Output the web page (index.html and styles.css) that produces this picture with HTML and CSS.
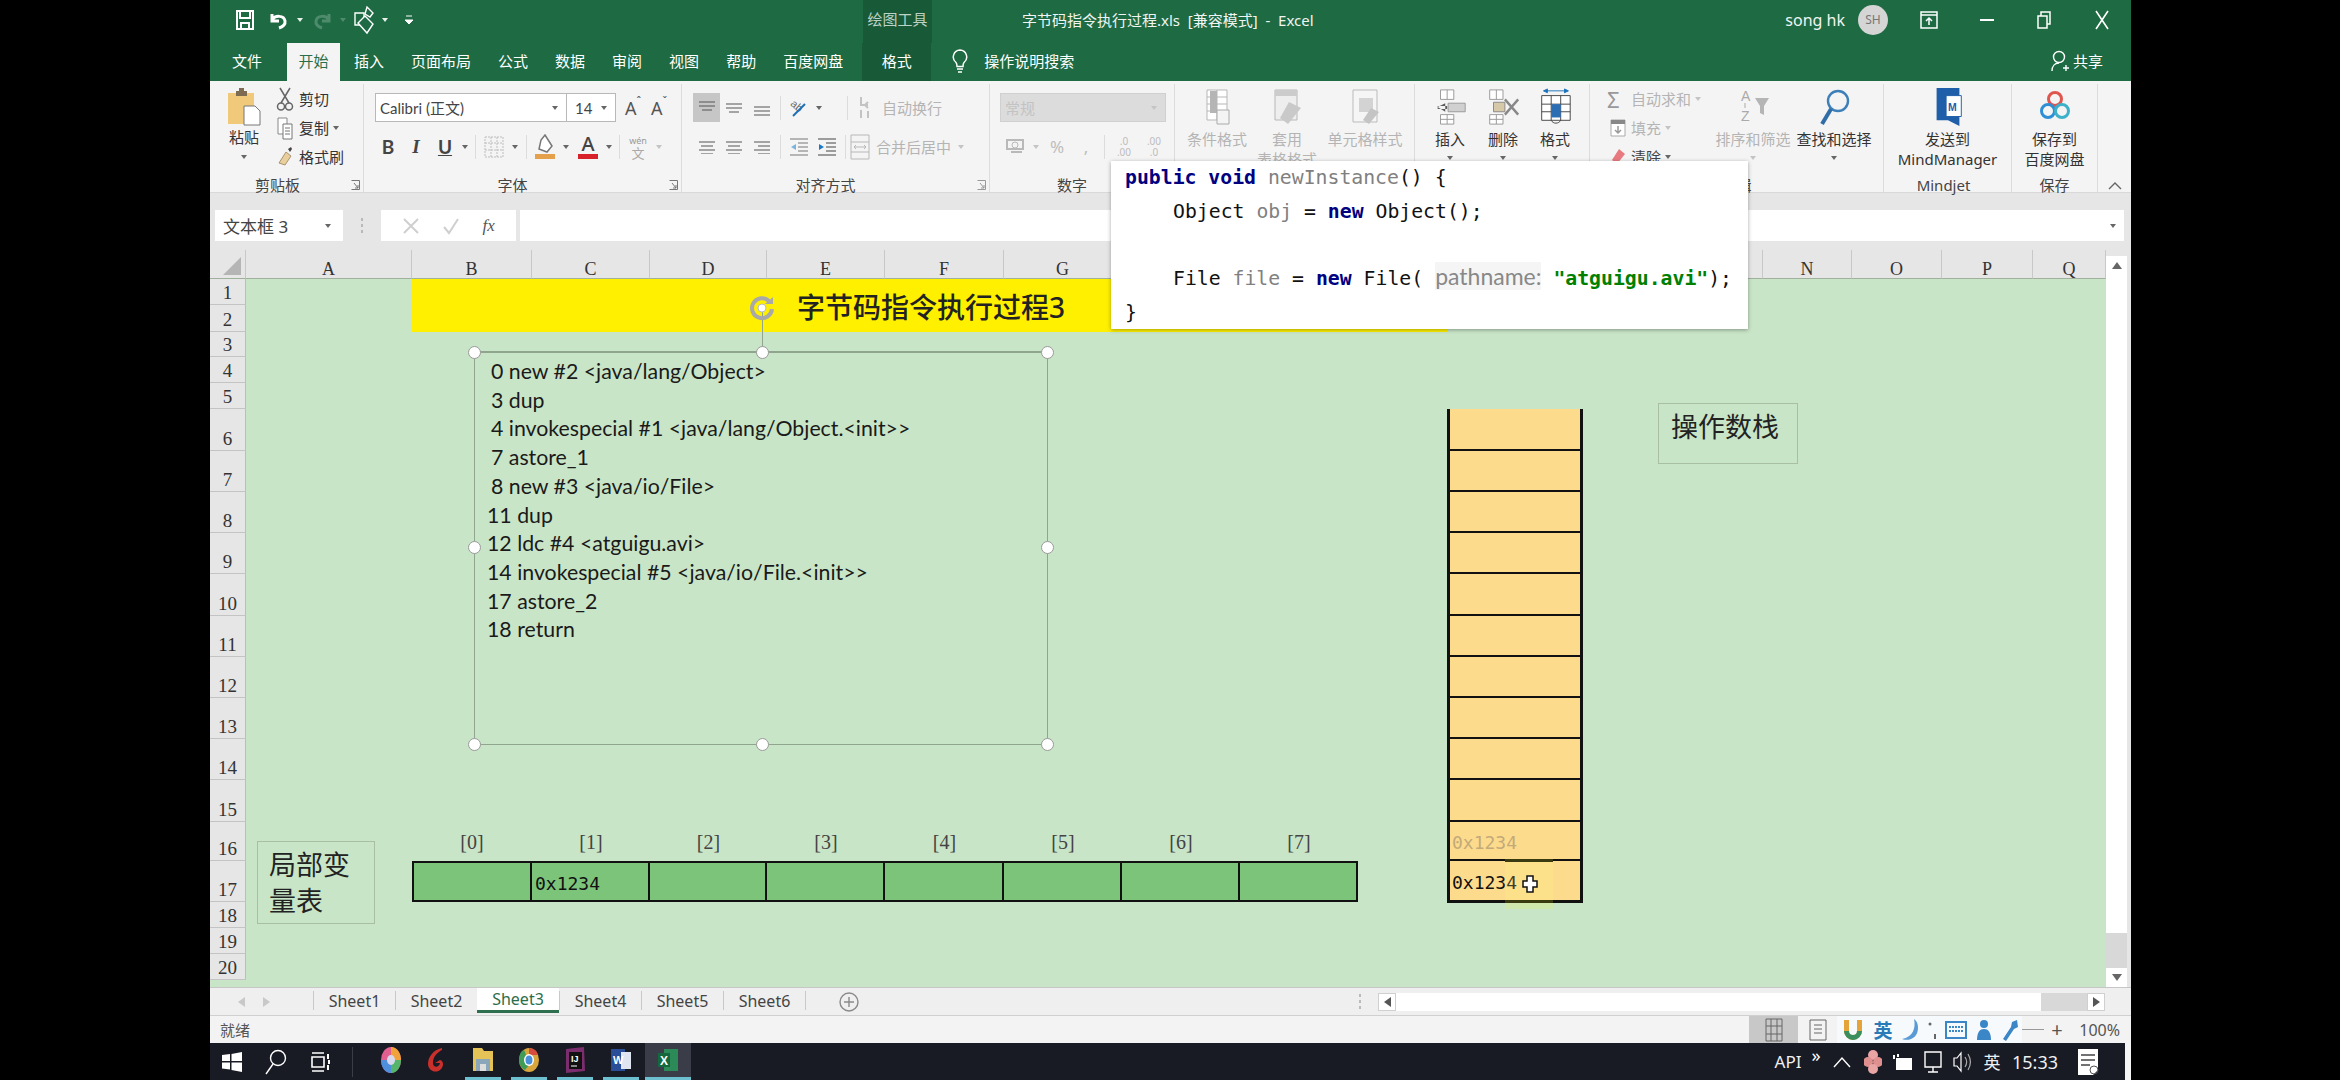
FILE: index.html
```html
<!DOCTYPE html>
<html lang="zh">
<head>
<meta charset="utf-8">
<title>字节码指令执行过程.xls - Excel</title>
<link rel="stylesheet" href="styles.css">
</head>
<body>
<div class="window">

  <header class="titlebar">
    <div class="qat">
      <span class="slot w46"><svg width="22" height="24" viewBox="0 0 22 24"><path d="M3 3h16v18H3z" fill="none" stroke="#fff" stroke-width="2"/><path d="M6 3h10v7H6zM7 21v-6h8v6" fill="none" stroke="#fff" stroke-width="2"/></svg></span>
      <span class="slot w22"><svg width="20" height="22" viewBox="0 0 20 22"><path d="M3 5v7h7M3 11c3-5 12-5 13 1 .6 4-3 6-6 7" fill="none" stroke="#fff" stroke-width="3"/></svg></span>
      <span class="slot w20"><i class="caret caret-light"></i></span>
      <span class="slot w24"><svg width="20" height="22" viewBox="0 0 20 22"><path d="M17 5v7h-7M17 11c-3-5-12-5-13 1-.6 4 3 6 6 7" fill="none" stroke="#4d8b6c" stroke-width="3"/></svg></span>
      <span class="slot w18"><i class="caret caret-dim"></i></span>
      <span class="slot w28"><svg width="26" height="30" viewBox="0 0 26 30"><path d="M2 8h9v12H2z" fill="none" stroke="#fff" stroke-width="1.4"/><path d="M14 2l6 6-3 4-5-3zM5 18l7-7 8 8-6 9z" fill="#1d6a44" stroke="#fff" stroke-width="1.4"/></svg></span>
      <span class="slot w10"><i class="caret caret-light"></i></span>
      <span class="slot w38"><svg width="10" height="12" viewBox="0 0 10 12"><path d="M2 2h6M1 6h8l-4 4z" fill="#fff" stroke="#fff"/></svg></span>
    </div>
    <div class="context-title">绘图工具</div>
    <div class="doc-title">字节码指令执行过程.xls&nbsp; [兼容模式]&nbsp; -&nbsp; Excel</div>
    <div class="win-controls">
      <span class="user-name">song hk</span>
      <span class="avatar">SH</span>
      <span class="slot w82"><svg width="18" height="18" viewBox="0 0 18 18"><path d="M1 1h16v16H1zM1 4h16M9 14V7M6 10l3-3 3 3" fill="none" stroke="#fff" stroke-width="1.5"/></svg></span>
      <span class="slot w34"><svg width="14" height="4" viewBox="0 0 14 4"><path d="M0 2h14" stroke="#fff" stroke-width="2"/></svg></span>
      <span class="slot w80"><svg width="14" height="18" viewBox="0 0 14 18"><path d="M1 5h9v12H1zM4 5V1h9v12h-3" fill="none" stroke="#fff" stroke-width="1.5"/></svg></span>
      <span class="slot w36"><svg width="14" height="20" viewBox="0 0 14 20"><path d="M1 1l12 18M13 1L1 19" stroke="#fff" stroke-width="1.6"/></svg></span>
    </div>
  </header>

  <nav class="tabs">
    <span class="tab">文件</span>
    <span class="tab tab-active">开始</span>
    <span class="tab">插入</span>
    <span class="tab">页面布局</span>
    <span class="tab">公式</span>
    <span class="tab">数据</span>
    <span class="tab">审阅</span>
    <span class="tab">视图</span>
    <span class="tab">帮助</span>
    <span class="tab">百度网盘</span>
    <span class="tab tab-context">格式</span>
    <span class="tell-me">
      <svg width="16" height="24" viewBox="0 0 16 24"><path d="M8 1a7 7 0 0 0-4 12.500c1 1 1 3 1 4h6c0-1 0-3 1-4A7 7 0 0 0 8 1zM5 20h6M6 23h4" fill="none" stroke="#fff" stroke-width="1.5"/></svg>
      <span>操作说明搜索</span>
    </span>
    <span class="share">
      <svg width="18" height="24" viewBox="0 0 18 24"><circle cx="8" cy="8" r="5.500" fill="none" stroke="#fff" stroke-width="1.400"/><path d="M1 22c0-5 3-8 7-8M12 19h6M15 16v6" fill="none" stroke="#fff" stroke-width="1.400"/></svg>
      <span>共享</span>
    </span>
  </nav>

  <section class="ribbon">
    <!-- 剪贴板 -->
    <div class="group g-clip">
      <div class="group-body clip-body">
        <div class="paste-col">
          <svg class="paste-icon" width="34" height="38" viewBox="0 0 34 38"><path d="M1 5h26v31H1z" fill="#f0c97a"/><path d="M9 3h3V0h5v3h3v5H9z" fill="#7d6c52"/><path d="M17 18h11l5 5v14H17z" fill="#fff" stroke="#777"/></svg>
          <span>粘贴</span>
          <i class="caret caret-dark paste-caret"></i>
        </div>
        <div class="three-rows">
          <div class="small-row"><svg class="small-icon" width="18" height="24" viewBox="0 0 18 24"><path d="M4 1l9 15M14 1L5 16" stroke="#666" stroke-width="1.500"/><circle cx="5" cy="19.500" r="3.500" fill="none" stroke="#666" stroke-width="1.500"/><circle cx="13" cy="19.500" r="3.500" fill="none" stroke="#666" stroke-width="1.500"/></svg><span>剪切</span></div>
          <div class="small-row"><svg class="small-icon" width="18" height="24" viewBox="0 0 18 24"><path d="M2 2h9v16H2z" fill="#fff" stroke="#888"/><path d="M7 8h9v15H7z" fill="#fff" stroke="#777"/><path d="M9 12h5M9 15h5M9 18h5" stroke="#777"/></svg><span>复制</span><i class="caret caret-dark copy-caret"></i></div>
          <div class="small-row"><svg class="small-icon" width="18" height="24" viewBox="0 0 18 24"><path d="M10 7l5 4-6 9-6-2z" fill="#e9cf9c" stroke="#a99370"/><path d="M12 4l3-2 1 2-2 3z" fill="#444"/></svg><span>格式刷</span></div>
        </div>
      </div>
      <div class="group-foot"><span class="foot-text">剪贴板</span><svg class="launcher" width="9" height="10" viewBox="0 0 9 10"><path d="M.5.500h8v9h-8M3 3l4 5M7 5v3H4" fill="none" stroke="#777"/></svg></div>
    </div>

    <!-- 字体 -->
    <div class="group g-font">
      <div class="group-body stacked">
        <div class="tool-row">
          <div class="field font-name"><span>Calibri (正文)</span><i class="caret caret-dark"></i></div>
          <div class="field font-size"><span>14</span><i class="caret caret-dark"></i></div>
          <span class="slot w26 letter-a big">A<sup>ˆ</sup></span>
          <span class="slot w26 letter-a">A<sup>ˇ</sup></span>
        </div>
        <div class="tool-row">
          <span class="slot w26 fmt fmt-b">B</span>
          <span class="slot w30 fmt fmt-i">I</span>
          <span class="slot w28 fmt fmt-u">U</span>
          <span class="slot w12"><i class="caret caret-dark"></i></span>
          <i class="vsep"></i>
          <span class="slot w28"><svg width="20" height="22" viewBox="0 0 20 22"><path d="M1 1h18v20H1zM1 7h18M1 14h18M7 1v20M13 1v20" fill="none" stroke="#bdbdbd" stroke-dasharray="2 1"/></svg></span>
          <span class="slot w14"><i class="caret caret-dark"></i></span>
          <i class="vsep"></i>
          <span class="slot w28"><svg width="24" height="26" viewBox="0 0 24 26"><path d="M12 1l7 11-5 6-8-3 2-9z" fill="#fff" stroke="#777" stroke-width="1.500"/><rect x="2" y="20" width="20" height="5" fill="#e4a04a"/></svg></span>
          <span class="slot w14"><i class="caret caret-dark"></i></span>
          <span class="slot w30 font-color"><span>A</span><i></i></span>
          <span class="slot w12"><i class="caret caret-dark"></i></span>
          <i class="vsep"></i>
          <span class="slot w28 wen"><small>wén</small><b>文</b></span>
          <span class="slot w14"><i class="caret caret-faint"></i></span>
        </div>
      </div>
      <div class="group-foot"><span class="foot-text">字体</span><svg class="launcher" width="9" height="10" viewBox="0 0 9 10"><path d="M.5.500h8v9h-8M3 3l4 5M7 5v3H4" fill="none" stroke="#777"/></svg></div>
    </div>

    <!-- 对齐方式 -->
    <div class="group g-align">
      <div class="group-body stacked">
        <div class="tool-row">
          <span class="slot w27 is-pressed"><svg width="18" height="14" viewBox="0 0 18 14"><path d="M1 1h16M1 5h16M4 9h10" stroke="#555"/></svg></span>
          <span class="slot w28"><svg width="18" height="14" viewBox="0 0 18 14"><path d="M1 3h16M1 7h16M4 11h10" stroke="#555"/></svg></span>
          <span class="slot w28"><svg width="18" height="18" viewBox="0 0 18 18"><path d="M1 8h16M1 12h16M1 16h16" stroke="#555"/></svg></span>
          <i class="vsep"></i>
          <span class="slot w28"><svg width="20" height="22" viewBox="0 0 20 22"><text x="1" y="13" class="svg-ab" transform="rotate(40 8 10)">ab</text><path d="M4 19L16 7" stroke="#1d6fb5" stroke-width="2"/></svg></span>
          <span class="slot w12"><i class="caret caret-dark"></i></span>
          <i class="vsep vsep-far"></i>
          <span class="slot w20"><svg width="20" height="24" viewBox="0 0 20 24"><path d="M5 1v8h7M12 6l-3 3 3 3M5 14v8M12 15v7" fill="none" stroke="#c3c3c3" stroke-width="2"/></svg></span>
          <span class="faint-label ml6">自动换行</span>
        </div>
        <div class="tool-row">
          <span class="slot w27"><svg width="18" height="14" viewBox="0 0 18 14"><path d="M1 2h16M3 6h12M1 10h16M3 14h12" stroke="#555"/></svg></span>
          <span class="slot w28"><svg width="18" height="14" viewBox="0 0 18 14"><path d="M1 2h16M3 6h12M1 10h16M3 14h12" stroke="#555"/></svg></span>
          <span class="slot w28"><svg width="18" height="14" viewBox="0 0 18 14"><path d="M1 2h16M5 6h12M1 10h16M5 14h12" stroke="#555"/></svg></span>
          <i class="vsep"></i>
          <span class="slot w28"><svg width="20" height="18" viewBox="0 0 20 18"><path d="M1 1h18M9 5h10M9 9h10M9 13h10M1 17h18" stroke="#777"/><path d="M7 6L2 9l5 3z" fill="#7db4dc"/></svg></span>
          <span class="slot w28"><svg width="20" height="18" viewBox="0 0 20 18"><path d="M1 1h18M9 5h10M9 9h10M9 13h10M1 17h18" stroke="#444"/><path d="M2 6l5 3-5 3z" fill="#1b79c5"/></svg></span>
          <i class="vsep"></i>
          <span class="slot w20"><svg width="20" height="26" viewBox="0 0 20 26"><path d="M1 1h18v24H1zM1 8h18M1 18h18M4 13h12M6 11l-2 2 2 2M14 11l2 2-2 2" fill="none" stroke="#b8b8b8"/></svg></span>
          <span class="faint-label ml6">合并后居中</span>
          <span class="slot w20"><i class="caret caret-faint"></i></span>
        </div>
      </div>
      <div class="group-foot"><span class="foot-text">对齐方式</span><svg class="launcher launcher-faint" width="9" height="10" viewBox="0 0 9 10"><path d="M.5.500h8v9h-8M3 3l4 5M7 5v3H4" fill="none" stroke="#999"/></svg></div>
    </div>

    <!-- 数字 -->
    <div class="group g-number">
      <div class="group-body stacked">
        <div class="tool-row">
          <div class="field number-format"><span>常规</span><i class="caret caret-faint"></i></div>
        </div>
        <div class="tool-row faint-tools">
          <span class="slot w30"><svg width="18" height="20" viewBox="0 0 18 20"><path d="M1 3h16v9H1zM5 15h11" fill="none" stroke="#b9b9b9" stroke-width="2"/><circle cx="9" cy="8" r="3" fill="none" stroke="#b9b9b9"/></svg></span>
          <span class="slot w12"><i class="caret caret-faint"></i></span>
          <span class="slot w30">%</span>
          <span class="slot w28">,</span>
          <i class="vsep"></i>
          <span class="slot w30 decimals">.0<br>.00</span>
          <span class="slot w30 decimals">.00<br>.0</span>
        </div>
      </div>
      <div class="group-foot"><span class="foot-text">数字</span></div>
    </div>

    <!-- 样式 -->
    <div class="group g-styles">
      <div class="group-body big-row">
        <div class="big-btn w84 is-faint">
          <svg width="36" height="38" viewBox="0 0 36 38"><path d="M8 2h20v30H8zM8 9h20M8 16h20M8 23h20M18 2v30" fill="#fff" stroke="#b7b7b7"/><path d="M11 3h7v22h-7z" fill="#b5b5b5"/><path d="M18 22h12v14H18z" fill="#f4f4f4" stroke="#aaa"/></svg>
          <span>条件格式</span>
        </div>
        <div class="big-btn w56 is-faint">
          <svg width="36" height="38" viewBox="0 0 36 38"><path d="M6 2h22v30H6z" fill="#eee" stroke="#b7b7b7"/><path d="M6 2h22v6H6z" fill="#ccc"/><path d="M20 14l12 6-13 16-8-6z" fill="#c9c9c9"/></svg>
          <span>套用</span>
          <span class="big-second">表格格式</span>
        </div>
        <div class="big-btn w100 is-faint">
          <svg width="36" height="38" viewBox="0 0 36 38"><path d="M6 2h24v32H6z" fill="#f5f5f5" stroke="#bbb"/><path d="M12 10h14v14H12z" fill="#d3d3d3"/><path d="M24 20l8 4-10 12-6-4z" fill="#c4c4c4"/></svg>
          <span>单元格样式</span>
        </div>
      </div>
      <div class="group-foot"></div>
    </div>

    <!-- 单元格 -->
    <div class="group g-cells">
      <div class="group-body big-row cells-row">
        <div class="big-btn w54">
          <svg width="36" height="40" viewBox="0 0 36 40"><path d="M8 2h14v10H8zM8 28h14v10H8zM8 33h14M15 2v10M15 28v10" fill="#fff" stroke="#999"/><path d="M16 16h18v9H16z" fill="#d0d0d0" stroke="#999"/><path d="M13 16l-8 4 8 5zM5 19h10v3H5z" fill="#5b5b5b"/></svg>
          <span>插入</span>
          <i class="caret caret-dark big-caret"></i>
        </div>
        <div class="big-btn w52">
          <svg width="36" height="40" viewBox="0 0 36 40"><path d="M4 2h14v10H4zM4 28h14v10H4zM4 33h14M11 2v10M11 28v10" fill="#fff" stroke="#999"/><path d="M8 15h12v10H8z" fill="#d6c9a8" stroke="#888"/><path d="M20 12l14 16M34 12L20 28" stroke="#888" stroke-width="2.500"/></svg>
          <span>删除</span>
          <i class="caret caret-dark big-caret"></i>
        </div>
        <div class="big-btn w52">
          <svg width="36" height="40" viewBox="0 0 36 40"><path d="M4 8h30v26H4zM4 17h30M4 25h30M14 8v26M24 8v26" fill="#fff" stroke="#444"/><path d="M14 17h10v14H14z" fill="#2c6eb4"/><path d="M6 3h26M6 3l4-2v4zM32 3l-4-2v4z" fill="#1b74bb" stroke="#1b74bb"/><path d="M14 34c2 4 8 4 10 0" fill="none" stroke="#444"/></svg>
          <span>格式</span>
          <i class="caret caret-dark big-caret"></i>
        </div>
      </div>
      <div class="group-foot"></div>
    </div>

    <!-- 编辑 -->
    <div class="group g-edit">
      <div class="group-body big-row">
        <div class="three-rows edit-rows">
          <div class="small-row faint-label"><span class="edit-icon sigma">Σ</span><span>自动求和</span><i class="caret caret-faint edit-caret"></i></div>
          <div class="small-row faint-label"><svg class="edit-icon" width="16" height="18" viewBox="0 0 16 18"><path d="M1 1h14v16H1z" fill="#fff" stroke="#aaa"/><path d="M1 1h14v4H1z" fill="#888"/><path d="M8 7v7M5 11l3 3 3-3" fill="none" stroke="#999" stroke-width="1.500"/></svg><span>填充</span><i class="caret caret-faint"></i></div>
          <div class="small-row dark-label"><svg class="edit-icon" width="16" height="18" viewBox="0 0 16 18"><path d="M9 1l6 5-8 10-5-4z" fill="#e87a7f"/></svg><span>清除</span><i class="caret caret-dark"></i></div>
        </div>
        <div class="big-btn w90 is-faint">
          <svg width="36" height="38" viewBox="0 0 36 38"><text x="6" y="13" class="svg-az">A</text><text x="6" y="33" class="svg-az">Z</text><path d="M10 15v5" stroke="#aaa"/><path d="M20 10h14l-5 8v9l-4-2v-7z" fill="#b5b5b5"/></svg>
          <span>排序和筛选</span>
          <i class="caret caret-faint big-caret"></i>
        </div>
        <div class="big-btn w72">
          <svg width="36" height="38" viewBox="0 0 36 38"><circle cx="22" cy="13" r="10" fill="none" stroke="#3d7fb8" stroke-width="2.400"/><path d="M15 21L6 36" stroke="#2f6da8" stroke-width="4"/></svg>
          <span>查找和选择</span>
          <i class="caret caret-dark big-caret"></i>
        </div>
      </div>
      <div class="group-foot"><span class="foot-text">编辑</span></div>
    </div>

    <!-- Mindjet -->
    <div class="group g-mind">
      <div class="group-body big-row">
        <div class="big-btn w-full">
          <svg width="32" height="40" viewBox="0 0 32 40"><path d="M4 0h24v40L16 34 4 34z" fill="#1f5ea8"/><path d="M14 8h16v22H14z" fill="#fff" stroke="#1f5ea8"/><text x="16" y="24" class="svg-mm">M</text></svg>
          <span>发送到</span>
          <span>MindManager</span>
        </div>
      </div>
      <div class="group-foot"><span class="foot-text">Mindjet</span></div>
    </div>

    <!-- 保存 -->
    <div class="group g-save">
      <div class="group-body big-row">
        <div class="big-btn w-full">
          <svg width="30" height="38" viewBox="0 0 30 38"><circle cx="15" cy="11" r="6.500" fill="none" stroke="#e0564f" stroke-width="3"/><circle cx="8" cy="23" r="6.500" fill="none" stroke="#2f8fd5" stroke-width="3"/><circle cx="22" cy="23" r="6.500" fill="none" stroke="#3db1c9" stroke-width="3"/></svg>
          <span>保存到</span>
          <span>百度网盘</span>
        </div>
      </div>
      <div class="group-foot"><span class="foot-text">保存</span></div>
    </div>

    <div class="ribbon-end"><svg width="14" height="8" viewBox="0 0 14 8"><path d="M1 7l6-6 6 6" fill="none" stroke="#666" stroke-width="1.400"/></svg></div>
  </section>

  <section class="formula-bar">
    <div class="name-box"><span>文本框 3</span><i class="caret caret-dark"></i></div>
    <div class="grip"><i></i><i></i><i></i></div>
    <div class="fx-box">
      <svg width="18" height="18" viewBox="0 0 18 18"><path d="M2 2l14 14M16 2L2 16" stroke="#cfcfcf" stroke-width="2"/></svg>
      <svg width="18" height="18" viewBox="0 0 18 18"><path d="M2 10l5 6L16 2" fill="none" stroke="#cfcfcf" stroke-width="2"/></svg>
      <span class="fx">fx</span>
    </div>
    <div class="formula-input"><i class="caret caret-dark"></i></div>
  </section>

  <section class="sheet-area">
    <div class="sheet">
      <div class="corner"><svg width="20" height="20" viewBox="0 0 20 20"><path d="M19 1v18H1z" fill="#b5b5b5"/></svg></div>
      <div class="col-head">A</div><div class="col-head">B</div><div class="col-head">C</div><div class="col-head">D</div><div class="col-head">E</div><div class="col-head">F</div><div class="col-head">G</div><div class="col-head"></div><div class="col-head"></div><div class="col-head"></div><div class="col-head"></div><div class="col-head"></div><div class="col-head"></div><div class="col-head">N</div><div class="col-head">O</div><div class="col-head">P</div><div class="col-head">Q</div>

      <div class="row-head r1">1</div><div class="row-head r2">2</div><div class="row-head r3">3</div><div class="row-head r4">4</div><div class="row-head r5">5</div><div class="row-head r6">6</div><div class="row-head r7">7</div><div class="row-head r8">8</div><div class="row-head r9">9</div><div class="row-head r10">10</div><div class="row-head r11">11</div><div class="row-head r12">12</div><div class="row-head r13">13</div><div class="row-head r14">14</div><div class="row-head r15">15</div><div class="row-head r16">16</div><div class="row-head r17">17</div><div class="row-head r18">18</div><div class="row-head r19">19</div><div class="row-head r20">20</div>

      <div class="banner"><span>字节码指令执行过程3</span></div>

      <div class="idx c-b">[0]</div><div class="idx c-c">[1]</div><div class="idx c-d">[2]</div><div class="idx c-e">[3]</div><div class="idx c-f">[4]</div><div class="idx c-g">[5]</div><div class="idx c-h">[6]</div><div class="idx c-i">[7]</div>

      <div class="var c-b var-first"></div><div class="var c-c">0x1234</div><div class="var c-d"></div><div class="var c-e"></div><div class="var c-f"></div><div class="var c-g"></div><div class="var c-h"></div><div class="var c-i"></div>

      <div class="stack r6"></div><div class="stack r7"></div><div class="stack r8"></div><div class="stack r9"></div><div class="stack r10"></div><div class="stack r11"></div><div class="stack r12"></div><div class="stack r13"></div><div class="stack r14"></div><div class="stack r15"></div><div class="stack r16 stack-ghost">0x1234</div><div class="stack r17 stack-last">0x1234</div>
    </div>

    <div class="vscroll">
      <div class="v-btn"><i class="tri tri-up"></i></div>
      <div class="v-thumb"></div>
      <div class="v-track"></div>
      <div class="v-btn v-btn-down"><i class="tri tri-down"></i></div>
    </div>

    <!-- objects floating on the sheet -->
    <div class="rotate-stem"></div>
    <svg class="rotate-handle" width="26" height="26" viewBox="0 0 26 26"><path d="M20 6a10 10 0 1 0 3 8" fill="none" stroke="#a9a9a9" stroke-width="4"/><path d="M16 9h8V2z" fill="#a9a9a9"/><circle cx="13" cy="13" r="4" fill="#fff" stroke="#bbb"/></svg>
    <div class="code-box">
      <p class="lead">0 new #2 &lt;java/lang/Object&gt;</p>
      <p class="lead">3 dup</p>
      <p class="lead">4 invokespecial #1 &lt;java/lang/Object.&lt;init&gt;&gt;</p>
      <p class="lead">7 astore_1</p>
      <p class="lead">8 new #3 &lt;java/io/File&gt;</p>
      <p>11 dup</p>
      <p>12 ldc #4 &lt;atguigu.avi&gt;</p>
      <p>14 invokespecial #5 &lt;java/io/File.&lt;init&gt;&gt;</p>
      <p>17 astore_2</p>
      <p>18 return</p>
      <i class="handle h-tl"></i><i class="handle h-tc"></i><i class="handle h-tr"></i>
      <i class="handle h-ml"></i><i class="handle h-mr"></i>
      <i class="handle h-bl"></i><i class="handle h-bc"></i><i class="handle h-br"></i>
    </div>
    <div class="note note-locals">局部变<br>量表</div>
    <div class="note note-stack">操作数栈</div>
    <div class="drag-ghost"></div>
    <svg class="cell-cursor" width="16" height="18" viewBox="0 0 16 18"><path d="M5 1h6v5h4v6h-4v5H5v-5H1V6h4z" fill="#fff" stroke="#111" stroke-width="1.500"/></svg>
  </section>

  <section class="sheet-tabs">
    <div class="tab-nav"><i class="tri tri-left"></i><i class="tri tri-right"></i></div>
    <span class="sheet-tab">Sheet1</span>
    <span class="sheet-tab">Sheet2</span>
    <span class="sheet-tab sheet-tab-active">Sheet3</span>
    <span class="sheet-tab">Sheet4</span>
    <span class="sheet-tab">Sheet5</span>
    <span class="sheet-tab">Sheet6</span>
    <span class="sheet-tab-end"></span>
    <svg class="add-sheet" width="20" height="20" viewBox="0 0 20 20"><circle cx="10" cy="10" r="9" fill="none" stroke="#8a8a8a" stroke-width="1.400"/><path d="M5 10h10M10 5v10" stroke="#8a8a8a" stroke-width="1.400"/></svg>
    <div class="hscroll">
      <div class="h-grip"><i></i><i></i><i></i></div>
      <div class="h-btn"><i class="tri tri-left tri-dark"></i></div>
      <div class="h-thumb"></div>
      <div class="h-track"></div>
      <div class="h-btn"><i class="tri tri-right tri-dark"></i></div>
    </div>
  </section>

  <footer class="statusbar">
    <span class="status-text">就绪</span>
    <div class="status-right">
      <span class="view-btn view-active"><svg width="18" height="24" viewBox="0 0 18 24"><path d="M1 1h16v22H1zM1 8h16M1 16h16M6 1v22M12 1v22" fill="none" stroke="#666"/></svg></span>
      <span class="view-btn view-page"><svg width="18" height="22" viewBox="0 0 18 22"><path d="M1 1h16v20H1zM5 6h8M5 10h8M5 14h8" fill="none" stroke="#666"/></svg></span>
      <div class="ime">
        <svg width="24" height="24" viewBox="0 0 24 24"><path d="M3 2v11a9 9 0 0 0 18 0V2h-5v11a4 4 0 0 1-8 0V2z" fill="#e5a43a"/><path d="M3 13a9 9 0 0 0 18 0h-5a4 4 0 0 1-8 0z" fill="#3a8f5f"/></svg>
        <span class="ime-en">英</span>
        <svg width="18" height="24" viewBox="0 0 18 24"><path d="M13 1c2 9-1 18-12 20 8 3 16-2 16-11 0-4-1-7-4-9z" fill="#5b9bd5"/></svg>
        <svg width="10" height="20" viewBox="0 0 10 20"><circle cx="3" cy="4" r="1.500" fill="#666"/><path d="M8 14v5" stroke="#666" stroke-width="2"/></svg>
        <svg width="22" height="18" viewBox="0 0 22 18"><rect x="1" y="1" width="20" height="16" fill="none" stroke="#3a86c6" stroke-width="2"/><path d="M4 6h14M4 10h14" stroke="#3a86c6" stroke-width="2" stroke-dasharray="2 1"/></svg>
        <svg width="16" height="24" viewBox="0 0 16 24"><circle cx="8" cy="6" r="4" fill="#3a86c6"/><path d="M1 22c0-8 3-11 7-11s7 3 7 11z" fill="#3a86c6"/></svg>
        <svg width="18" height="24" viewBox="0 0 18 24"><path d="M17 2l-5 2-1 5-8 12 3 2 8-12 4-2z" fill="#3a86c6"/></svg>
      </div>
      <i class="zoom-line"></i>
      <span class="zoom-plus">+</span>
      <span class="zoom-value">100%</span>
    </div>
  </footer>

  <div class="taskbar">
    <div class="task-left">
      <svg class="task-win" width="20" height="20" viewBox="0 0 20 20"><path d="M0 3l8-1v7H0zM9.500 2l10.500-2v9H9.500zM0 10.500h8v7l-8-1zM9.500 10.500H20V20l-10.500-2z" fill="#fff"/></svg>
      <svg class="task-search" width="22" height="26" viewBox="0 0 22 26"><circle cx="13" cy="9" r="7.500" fill="none" stroke="#fff" stroke-width="1.400"/><path d="M8 15L1 25" stroke="#fff" stroke-width="1.400"/></svg>
      <svg class="task-view" width="20" height="20" viewBox="0 0 20 20"><path d="M1 1h12M1 19h12M1 5h12v10H1z" fill="none" stroke="#fff" stroke-width="1.600"/><path d="M17 2v5M17 9h1v2h-1M17 13v5" stroke="#fff" stroke-width="2"/></svg>
      <i class="task-sep"></i>
      <span class="task-icon"><svg width="22" height="28" viewBox="0 0 22 28"><ellipse cx="11" cy="14" rx="10" ry="13" fill="#e1608f"/><path d="M11 1c6 0 10 6 10 13H11z" fill="#f2a23a"/><path d="M21 14c0 7-4 13-10 13V14z" fill="#55b56a"/><path d="M11 27C5 27 1 21 1 14h10z" fill="#4f8fdc"/><ellipse cx="11" cy="14" rx="4" ry="5" fill="#d9d9ee"/></svg></span>
      <span class="task-icon"><svg width="22" height="26" viewBox="0 0 22 26"><path d="M16 1C7 3 2 10 2 17c0 6 7 10 12 6 4-3 4-9 0-10l-5 3h5c-1 5-7 5-7 0 0-7 5-11 9-13z" fill="#c9302c"/></svg></span>
      <span class="task-icon task-on task-folder"><svg width="22" height="26" viewBox="0 0 22 26"><path d="M1 1h9l2 3h9v20H1z" fill="#e6c356"/><path d="M4 12h14v12H4z" fill="#8aa6b8"/><path d="M8 17h6v7H8z" fill="#ddd"/></svg></span>
      <span class="task-icon task-on"><svg width="22" height="26" viewBox="0 0 22 26"><ellipse cx="11" cy="13" rx="10" ry="12" fill="#d9a53d"/><path d="M11 1c5 0 8 3 9 7H11z" fill="#d64d3f"/><path d="M1 13C1 8 3 4 6 3l6 14-5 6c-4-2-6-6-6-10z" fill="#3f9b55"/><ellipse cx="11" cy="13" rx="5" ry="6" fill="#fff"/><ellipse cx="11" cy="13" rx="3.500" ry="4.500" fill="#4a90d9"/></svg></span>
      <span class="task-icon task-on"><svg width="22" height="28" viewBox="0 0 22 28"><path d="M2 3l18-2 1 24-19 2z" fill="#7c2d6e"/><path d="M5 6h13v17H5z" fill="#111"/><text x="7" y="16" class="svg-ij">IJ</text><path d="M7 20h6" stroke="#fff"/></svg></span>
      <span class="task-icon task-on"><svg width="22" height="28" viewBox="0 0 22 28"><path d="M1 3h14v22H1z" fill="#2a4f98"/><path d="M11 6h10v17H11z" fill="#dfe6f2"/><text x="3" y="18" class="svg-w">W</text></svg></span>
      <span class="task-icon task-on task-active"><svg width="22" height="28" viewBox="0 0 22 28"><path d="M7 3h14v22H7z" fill="#2b8a57"/><path d="M1 7h12v14H1z" fill="#14683d"/><text x="3" y="19" class="svg-x">X</text></svg></span>
    </div>
    <div class="tray">
      <span class="slot w36 tray-text">API</span>
      <span class="slot w20 tray-more">»</span>
      <span class="slot w32"><svg width="18" height="12" viewBox="0 0 18 12"><path d="M1 11l8-9 8 9" fill="none" stroke="#fff" stroke-width="1.400"/></svg></span>
      <span class="slot w30"><svg width="18" height="24" viewBox="0 0 18 24"><circle cx="9" cy="5" r="5" fill="#e9a4a4"/><circle cx="4" cy="12" r="5" fill="#e08f8f"/><circle cx="14" cy="12" r="5" fill="#e08f8f"/><circle cx="9" cy="19" r="5" fill="#e9a4a4"/></svg></span>
      <span class="slot w30"><svg width="20" height="20" viewBox="0 0 20 20"><path d="M3 6h16v12H3z" fill="#fff"/><path d="M1 3v4M5 2v3" stroke="#fff" stroke-width="2"/></svg></span>
      <span class="slot w30"><svg width="20" height="24" viewBox="0 0 20 24"><path d="M2 2h16v15H2zM10 17v5M5 22h10" fill="none" stroke="#fff" stroke-width="1.400"/></svg></span>
      <span class="slot w28"><svg width="18" height="24" viewBox="0 0 18 24"><path d="M1 8h3l4-5v18l-4-5H1z" fill="none" stroke="#fff" stroke-width="1.200"/><path d="M12 7c2 3 2 7 0 10M15 4c3 5 3 11 0 16" fill="none" stroke="#aaa" stroke-width="1.200"/></svg></span>
      <span class="slot w32 tray-text">英</span>
      <span class="slot w54 tray-text tray-clock">15:33</span>
      <span class="slot w52"><svg width="22" height="28" viewBox="0 0 22 28"><path d="M1 1h20v21l-5 5H1z" fill="#fff"/><path d="M4 7h14M4 12h14M4 17h9" stroke="#444" stroke-width="1.500"/><circle cx="17" cy="22" r="4" fill="none" stroke="#555"/></svg></span>
    </div>
  </div>

  <div class="code-popup">
    <div class="code-line"><b>public void</b> <em>newInstance</em>() {</div>
    <div class="code-line code-in">Object <em>obj</em> = <b>new</b> Object();</div>
    <div class="code-line">&nbsp;</div>
    <div class="code-line code-in">File <em>file</em> = <b>new</b> File(<span class="hint">pathname:</span> <strong>"atguigu.avi"</strong>);</div>
    <div class="code-line">}</div>
  </div>
</div>
</body>
</html>
```

FILE: styles.css
```css
* { box-sizing: border-box; }
html, body { margin: 0; height: 100%; background: #000; overflow: hidden; }
body { font-family: "Noto Sans", "Noto Sans CJK SC", sans-serif; font-size: 15px; color: #333; }
p { margin: 0; }
i, em { font-style: normal; }
svg { display: block; flex: none; }

.window { position: relative; width: 1921px; height: 1080px; margin-left: 210px; display: flex; flex-direction: column; background: #f4f4f4; }

/* shared */
.slot { display: flex; align-items: center; justify-content: center; flex: none; height: 100%; }
.w10 { width: 10px; } .w12 { width: 12px; } .w14 { width: 14px; } .w18 { width: 18px; } .w20 { width: 20px; }
.w22 { width: 22px; } .w24 { width: 24px; } .w26 { width: 26px; } .w27 { width: 27px; } .w28 { width: 28px; }
.w30 { width: 30px; } .w32 { width: 32px; } .w34 { width: 34px; } .w36 { width: 36px; } .w38 { width: 38px; } .w46 { width: 46px; }
.w52 { width: 52px; } .w54 { width: 54px; } .w56 { width: 56px; } .w72 { width: 72px; } .w80 { width: 80px; }
.w82 { width: 82px; } .w84 { width: 84px; } .w90 { width: 90px; } .w100 { width: 100px; } .w-full { width: 100%; }
.caret { display: block; width: 0; height: 0; border-left: 3px solid transparent; border-right: 3px solid transparent; border-top: 4px solid #666; flex: none; }
.caret-light { border-top-color: #e8f1ec; }
.caret-dim { border-top-color: #4d8b6c; }
.caret-dark { border-top-color: #666; }
.caret-faint { border-top-color: #c4c4c4; }
.tri { display: block; width: 0; height: 0; }
.tri-up { border: 5px solid transparent; border-top: 0; border-bottom: 7px solid #666; }
.tri-down { border: 5px solid transparent; border-bottom: 0; border-top: 7px solid #666; }
.tri-left { border: 5px solid transparent; border-left: 0; border-right: 7px solid #c8c8c8; }
.tri-right { border: 5px solid transparent; border-right: 0; border-left: 7px solid #c8c8c8; }
.tri-left.tri-dark { border-right-color: #555; }
.tri-right.tri-dark { border-left-color: #555; }

/* title bar */
.titlebar { height: 43px; display: flex; align-items: stretch; background: #1e6a43; color: #fff; flex: none; }
.qat { display: flex; padding: 0 0 4px 12px; width: 653px; flex: none; }
.context-title { width: 69px; padding-bottom: 6px; background: #185a38; display: flex; align-items: center; justify-content: center; font-size: 15px; color: #bcd2c6; flex: none; }
.doc-title { margin-left: 90px; padding-bottom: 5px; display: flex; align-items: center; font-size: 15px; color: #f0f5f2; white-space: nowrap; }
.win-controls { margin-left: auto; display: flex; align-items: center; padding: 0 11px 4px 0; }
.user-name { font-size: 16px; color: #f0f5f2; }
.avatar { width: 30px; height: 30px; margin-left: 13px; border-radius: 50%; background: #d5d5d5; color: #777; font-size: 12px; display: flex; align-items: center; justify-content: center; }

/* tab row */
.tabs { height: 38px; display: flex; align-items: stretch; gap: 1px; padding-left: 9px; background: #1e6a43; color: #fff; flex: none; }
.tab { padding: 0 13px 3px; display: flex; align-items: center; font-size: 15px; white-space: nowrap; }
.tab-active { margin-left: 11px; padding: 0 11.5px 3px; background: #f4f4f4; color: #2b6e4a; }
.tab-context { margin-left: 5px; width: 69px; padding: 0 0 3px; justify-content: center; background: #185a38; }
.tell-me { margin-left: 20px; padding-bottom: 3px; display: flex; align-items: center; gap: 16px; font-size: 15px; }
.share { margin-left: auto; padding: 0 28px 3px 0; display: flex; align-items: center; gap: 4px; font-size: 15px; }

/* ribbon */
.ribbon { height: 112px; display: flex; background: #f5f4f4; flex: none; border-bottom: 1px solid #d9d9d9; }
.group { flex: none; display: grid; grid-template-rows: 94px 15px; border-right: 1px solid #dcdcdc; margin: 3px 0 0; }
.group-body { min-width: 0; }
.group-foot { position: relative; display: flex; justify-content: center; align-items: center; font-size: 15px; line-height: 15px; color: #444; white-space: nowrap; }
.launcher { position: absolute; right: 3px; top: 2px; }
.g-clip { width: 154px; } .g-font { width: 318px; } .g-align { width: 308px; } .g-number { width: 185px; }
.g-styles { width: 240px; } .g-cells { width: 175px; } .g-edit { width: 294px; } .g-mind { width: 128px; } .g-save { width: 86px; }
.g-clip .group-foot { padding-right: 18px; }
.g-font .group-foot, .g-align .group-foot, .g-number .group-foot { padding-right: 20px; }
.g-mind .group-foot { padding-right: 8px; }
.ribbon-end { flex: 1; display: flex; align-items: flex-end; justify-content: center; padding-bottom: 2px; }

.clip-body { display: flex; padding-left: 20px; }
.paste-col { width: 40px; display: flex; flex-direction: column; align-items: center; margin-left: -6px; padding-top: 4px; color: #333; }
.paste-icon { margin-bottom: 1px; }
.paste-col span { line-height: 20px; }
.paste-caret { margin-top: 8px; }
.three-rows { display: flex; flex-direction: column; }
.clip-body .three-rows { margin-left: 12px; }
.small-row { height: 29px; display: flex; align-items: center; white-space: nowrap; font-size: 15px; color: #333; }
.small-icon { margin-right: 5px; }
.small-row > .copy-caret { margin-left: 15px; }

.stacked { display: flex; flex-direction: column; padding-top: 4px; }
.tool-row { height: 39px; display: flex; align-items: center; }
.tool-row > .slot { height: 29px; }
.g-font .stacked { padding-left: 11px; }
.g-align .stacked { padding-left: 11px; }
.g-number .stacked { padding-left: 10px; }
.field { height: 29px; display: flex; align-items: center; justify-content: space-between; background: #fff; border: 1px solid #b8b8b8; padding: 0 8px 0 4px; font-size: 15px; color: #444; }
.font-name { width: 192px; font-family: "Lato", "Noto Sans CJK SC", sans-serif; }
.font-size { width: 50px; margin-left: -1px; padding-left: 8px; font-family: "Lato", sans-serif; }
.letter-a { font-size: 18px; color: #555; }
.letter-a sup { font-size: 11px; line-height: 0; align-self: flex-start; margin-top: 8px; }
.g-font .letter-a:first-of-type { margin-left: 4px; }
.fmt { font-family: "Liberation Serif", serif; font-size: 19px; color: #444; font-weight: 700; }
.fmt-b { font-family: "Lato", sans-serif; }
.fmt-i { font-style: italic; }
.fmt-u { font-family: "Lato", sans-serif; text-decoration: underline; }
.vsep { display: block; width: 1px; height: 24px; background: #dcdcdc; margin: 0 4px; flex: none; }
.vsep-far { margin: 0 8px 0 22px; }
.font-color { flex-direction: column; font-size: 20px; line-height: 20px; color: #444; font-weight: 500; }
.font-color i { display: block; width: 20px; height: 5px; background: #d8222b; }
.wen { flex-direction: column; color: #aaa; line-height: 12px; }
.wen small { font-size: 9px; color: #999; }
.wen b { font-size: 13px; font-weight: 400; }
.is-pressed { background: #c6c6c6; }
.svg-ab { font: 11px "Liberation Sans", sans-serif; fill: #666; }
.faint-label { color: #b4b4b4; font-size: 15px; white-space: nowrap; }
.dark-label { color: #444; }
.faint-label .small-row, .small-row.faint-label { color: #b4b4b4; }
.ml6 { margin-left: 6px; }
.number-format { width: 166px; background: #dcdcdc; color: #c3c3c3; border-color: #d0d0d0; }
.faint-tools { color: #bdbdbd; font-size: 17px; }
.decimals { font-size: 10px; line-height: 11px; text-align: center; }

.big-row { display: flex; }
.big-btn { display: flex; flex-direction: column; align-items: center; flex: none; padding-top: 4px; white-space: nowrap; color: #333; }
.big-btn svg { height: 38px; margin-bottom: 3px; }
.big-btn > span { line-height: 20px; font-size: 15px; }
.big-btn.is-faint { color: #b4b4b4; }
.big-caret { margin-top: 7px; }
.big-second { color: #b4b4b4; }
.cells-row { padding-left: 8px; }
.edit-rows { width: 118px; padding-left: 17px; }
.edit-icon { width: 22px; margin-right: 2px; }
.sigma { font-size: 22px; line-height: 22px; color: #999; }
.edit-caret { margin-left: 14px; }
.small-row > .caret { margin-left: 4px; }
.svg-az { font: 14px "Liberation Sans", sans-serif; fill: #aaa; }
.svg-mm { font: 700 11px "Liberation Sans", sans-serif; fill: #1f5ea8; }

/* formula bar */
.formula-bar { height: 57px; display: flex; align-items: flex-start; padding: 17px 7px 0 5px; background: #e6e6e6; flex: none; }
.name-box { width: 128px; height: 31px; display: flex; align-items: center; justify-content: space-between; padding: 0 12px 0 8px; background: #fff; font-size: 17px; color: #444; }
.grip { width: 38px; height: 31px; display: flex; flex-direction: column; align-items: center; justify-content: center; gap: 3px; }
.grip i { width: 2px; height: 3px; background: #b9b9b9; }
.fx-box { width: 135px; height: 31px; display: flex; align-items: center; justify-content: space-around; padding: 0 10px; background: #fff; }
.fx { font: italic 17px "Liberation Serif", serif; color: #555; }
.formula-input { flex: 1; height: 31px; margin-left: 4px; padding-right: 8px; display: flex; align-items: center; justify-content: flex-end; background: #fff; }

/* sheet */
.sheet-area { position: relative; height: 737px; display: flex; background: #e6e6e6; flex: none; }
.sheet {
  width: 1896px; height: 737px; flex: none; background: #c9e5c7;
  display: grid;
  grid-template-columns: 36px 166px 120px 118px 117px 118px 119px 118px 118px 118px 89px 136px 90px 90px 89px 90px 91px 73px;
  grid-template-rows: 29px 26px 27px 25px 26px 26px 42px 41px 41px 41px 42px 41px 41px 41px 41px 42px 39px 41px 26px 26px 26px 7px;
}
.corner { grid-row: 1; grid-column: 1; display: flex; justify-content: flex-end; align-items: flex-end; padding: 0 3px 2px 0; background: #e6e6e6; border-right: 1px solid #c8c8c8; border-bottom: 1px solid #9fb19d; }
.col-head { grid-row: 1; display: flex; align-items: flex-end; justify-content: center; background: #e6e6e6; border-right: 1px solid #c8c8c8; border-bottom: 1px solid #9fb19d; font: 18px/1 "Liberation Serif", serif; color: #333; }
.row-head { grid-column: 1; display: flex; align-items: flex-end; justify-content: center; padding-bottom: 2px; background: #e6e6e6; border-right: 1px solid #b4c4b2; border-bottom: 1px solid #c4c4c4; font: 19px/1 "Liberation Serif", serif; color: #333; }
.r1 { grid-row: 2; } .r2 { grid-row: 3; } .r3 { grid-row: 4; } .r4 { grid-row: 5; } .r5 { grid-row: 6; }
.r6 { grid-row: 7; } .r7 { grid-row: 8; } .r8 { grid-row: 9; } .r9 { grid-row: 10; } .r10 { grid-row: 11; }
.r11 { grid-row: 12; } .r12 { grid-row: 13; } .r13 { grid-row: 14; } .r14 { grid-row: 15; } .r15 { grid-row: 16; }
.r16 { grid-row: 17; } .r17 { grid-row: 18; } .r18 { grid-row: 19; } .r19 { grid-row: 20; } .r20 { grid-row: 21; }
.c-b { grid-column: 3; } .c-c { grid-column: 4; } .c-d { grid-column: 5; } .c-e { grid-column: 6; }
.c-f { grid-column: 7; } .c-g { grid-column: 8; } .c-h { grid-column: 9; } .c-i { grid-column: 10; }

.banner { grid-row: 2 / 4; grid-column: 3 / 12; background: #fff000; display: flex; align-items: center; padding-left: 385px; }
.banner span { font-size: 28px; font-weight: 500; color: #222; white-space: nowrap; }
.idx { grid-row: 17; display: flex; align-items: center; justify-content: center; font: 20px/1 "Liberation Serif", serif; color: #444; }
.var { grid-row: 18; background: #7dc47b; border: solid #111; border-width: 2px 2px 2px 0; display: flex; align-items: center; padding: 4px 0 0 3px; font: 18px/1 "DejaVu Sans Mono", monospace; color: #111; }
.var-first { border-left-width: 2px; }
.stack { grid-column: 12; margin-bottom: -1px; background: #fcdc8c; border: solid #111; border-width: 0 3px 3px 3px; display: flex; align-items: center; padding: 4px 0 0 2px; font: 18px/1 "DejaVu Sans Mono", monospace; color: #111; }
.stack-ghost { color: #c4aa7a; }

.vscroll { width: 21px; height: 731px; margin-top: 6px; display: flex; flex-direction: column; flex: none; background: #d8d8d8; }
.v-btn { height: 19px; display: flex; align-items: center; justify-content: center; background: #fff; flex: none; }
.v-thumb { height: 658px; background: #fff; flex: none; }
.v-track { flex: 1; background: #d8d8d8; }

/* floating objects */
.rotate-stem { position: absolute; left: 552px; top: 58px; width: 1px; height: 43px; background: #8fa58d; }
.rotate-handle { position: absolute; left: 539px; top: 45px; }
.code-box { position: absolute; left: 264px; top: 101px; width: 574px; height: 394px; border: 1px solid #8fa58d; border-top-width: 2px; padding: 4px 0 0 12px; font: 21.300px/28.700px "Lato", sans-serif; color: #1a1a1a; white-space: nowrap; }
.lead { padding-left: 4px; }
.handle { position: absolute; width: 13px; height: 13px; border-radius: 50%; background: #fff; border: 1.500px solid #9a9a9a; }
.h-tl, .h-tc, .h-tr { top: -7px; } .h-bl, .h-bc, .h-br { bottom: -7px; } .h-ml, .h-mr { top: 188px; }
.h-tl, .h-ml, .h-bl { left: -7px; } .h-tr, .h-mr, .h-br { right: -7px; } .h-tc, .h-bc { left: 281px; }
.note { position: absolute; border: 1px solid #a8bfa6; font-size: 27px; color: #222; }
.note-locals { left: 47px; top: 591px; width: 118px; height: 83px; padding: 5px 0 0 11px; line-height: 36px; }
.note-stack { left: 1448px; top: 153px; width: 140px; height: 61px; padding-left: 12px; line-height: 46px; white-space: nowrap; }
.cell-cursor { position: absolute; left: 1312px; top: 625px; }
.drag-ghost { position: absolute; left: 1295px; top: 609px; width: 48px; height: 44px; border: solid #3a3a10; border-width: 3px 0; background: rgba(255, 240, 130, .2); box-shadow: 0 6px 0 rgba(215, 235, 150, .55); }

/* sheet tabs */
.sheet-tabs { height: 29px; display: flex; align-items: stretch; background: #efefef; flex: none; border-top: 1px solid #c6c6c6; border-bottom: 1px solid #d0d0d0; }
.tab-nav { width: 103px; display: flex; align-items: center; gap: 18px; padding-left: 28px; }
.sheet-tab { width: 82px; display: flex; align-items: center; justify-content: center; border-left: 1px solid #c8c8c8; font: 16px "Noto Sans", sans-serif; color: #444; margin: 3px 0 5px; }
.sheet-tab-active { margin: 0 0 2px; background: #fff; color: #2b6e4a; border-bottom: 3px solid #2f6f4f; border-left: 0; }
.sheet-tab-end { width: 1px; margin: 3px 0 5px; background: #c8c8c8; }
.add-sheet { align-self: center; margin-left: 33px; }
.hscroll { margin-left: auto; display: flex; align-items: center; padding-right: 26px; }
.h-grip { width: 20px; display: flex; flex-direction: column; align-items: center; gap: 3px; margin-right: 8px; }
.h-grip i { width: 2px; height: 3px; background: #bbb; }
.h-btn { width: 18px; height: 18px; background: #fff; display: flex; align-items: center; justify-content: center; border: 1px solid #d0d0d0; }
.h-thumb { width: 645px; height: 18px; background: #fff; }
.h-track { width: 46px; height: 18px; background: #d8d8d8; }

/* status bar */
.statusbar { height: 27px; display: flex; align-items: stretch; background: #f3f3f3; flex: none; }
.status-text { padding-left: 10px; display: flex; align-items: center; font-size: 15px; color: #555; }
.status-right { margin-left: auto; display: flex; align-items: center; }
.view-btn { width: 49px; height: 100%; display: flex; align-items: center; justify-content: center; }
.view-page { width: 39px; }
.view-active { background: #c8c8c8; }
.ime { width: 185px; height: 100%; margin-left: 0; display: flex; align-items: center; justify-content: space-around; background: #f6fafd; }
.ime-en { font-size: 19px; font-weight: 700; color: #2a7ab8; }
.zoom-line { display: block; width: 22px; height: 1px; background: #999; }
.zoom-plus { width: 26px; text-align: center; font-size: 20px; color: #555; }
.zoom-value { width: 50px; margin-right: 11px; font-size: 16px; color: #555; text-align: right; }

/* taskbar */
.taskbar { height: 37px; width: 1915px; display: flex; align-items: center; justify-content: space-between; background: #181a24; flex: none; }
.task-left { display: flex; align-items: center; height: 100%; }
.task-win { margin-left: 12px; }
.task-search { margin-left: 23px; }
.task-view { margin-left: 24px; }
.task-sep { display: block; width: 1px; height: 30px; background: #3a3c46; margin: 0 15px 0 21px; }
.task-icon { width: 46px; height: 100%; display: flex; align-items: center; justify-content: center; border-bottom: 3px solid transparent; }
.task-icon.task-on { width: 36px; margin-right: 10px; border-bottom-color: #6cc0cf; }
.task-folder { margin-left: 5px; }
.task-active.task-on { width: 46px; margin: 0 0 0 -4px; background: #3a3d47; }
.svg-ij { font: 700 9px "Liberation Sans", sans-serif; fill: #fff; }
.svg-w { font: 700 11px "Liberation Sans", sans-serif; fill: #fff; }
.svg-x { font: 700 12px "Liberation Sans", sans-serif; fill: #fff; }
.tray { display: flex; align-items: center; height: 100%; padding-right: 11px; color: #fff; }
.tray-text { font-size: 17px; color: #f0f0f0; white-space: nowrap; }
.tray-more { font-size: 18px; padding-bottom: 14px; }
.tray-clock { font-size: 18px; }

/* pop-up code snippet */
.code-popup { position: absolute; left: 901px; top: 161px; width: 637px; height: 168px; padding: 0 0 0 14px; background: #fff; box-shadow: 0 1px 4px rgba(0,0,0,.35); font: 19.800px/33.700px "DejaVu Sans Mono", monospace; color: #111; }
.code-line { white-space: pre; }
.code-line b { font-weight: 700; color: #000080; }
.code-line em { color: #808080; }
.code-line strong { font-weight: 700; color: #008000; }
.code-in { padding-left: 48px; }
.hint { margin-left: 12px; color: #888; background: #f5f5f5; font: 23px "Lato", sans-serif; }
```
